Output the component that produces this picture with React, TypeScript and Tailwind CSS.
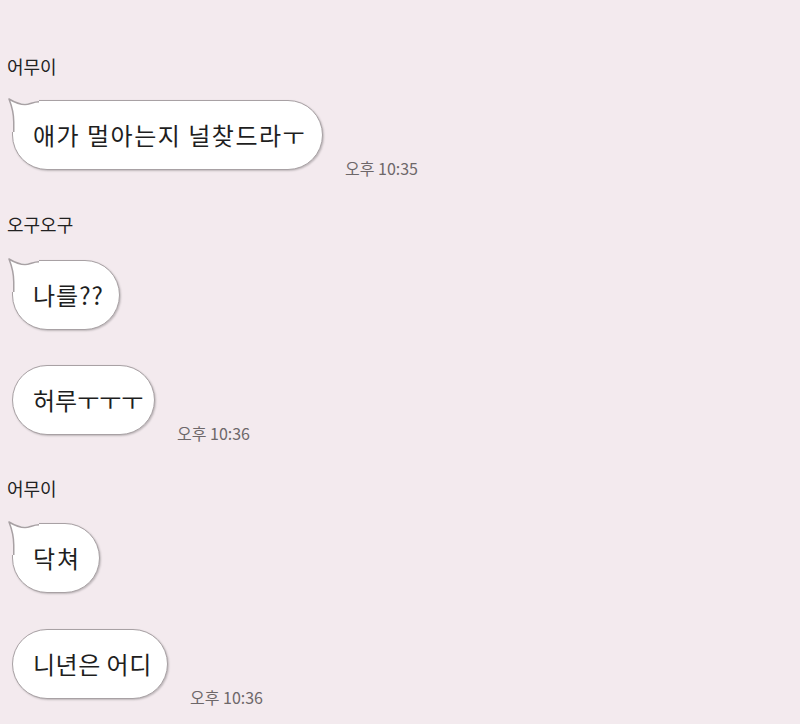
import React from "react";

const FONT = { fontFamily: '"Noto Sans CJK KR", "Noto Sans", sans-serif' };

function Tail() {
  return (
    <svg
      className="absolute left-[-5px] top-[-3px] pointer-events-none"
      width="36"
      height="36"
      viewBox="0 0 36 36"
    >
      <rect x="0" y="0" width="31" height="5.2" fill="#f3eaee" />
      <rect x="0" y="0" width="5" height="34" fill="#f3eaee" />
      <path
        d="M30.5,3.75 C25,3.75 22,6.6 17,6.6 C12,6.6 6,4 1,1 C3,6 5.75,14 5.75,24 L5.75,36 L30.5,36 Z"
        fill="#ffffff"
      />
      <path
        d="M31,3.75 C25,3.75 22,6.6 17,6.6 C12,6.6 6,4 1,1 C3,6 5.75,14 5.75,24 L5.75,34"
        fill="none"
        stroke="#a8a1a4"
        strokeWidth="1.5"
        strokeLinejoin="round"
      />
    </svg>
  );
}

function Bubble({
  text,
  tail,
  time,
  widthClass,
  trackClass,
}: {
  text: string;
  tail?: boolean;
  time?: string;
  widthClass: string;
  trackClass?: string;
}) {
  return (
    <div className="flex items-end pl-[12px]">
      <div
        className={
          "relative flex h-[70px] items-center whitespace-nowrap rounded-[35px] border-[1.5px] border-[#a8a1a4] bg-white pl-[20px] text-[24px] leading-none text-[#1e1e1e] shadow-[1px_1px_2px_rgba(0,0,0,0.22)] " +
          widthClass +
          " " +
          (trackClass ?? "") +
          " " +
          (tail ? "rounded-tl-none" : "")
        }
      >
        {tail && <Tail />}
        <span className="relative">{text}</span>
      </div>
      {time && (
        <div className="mb-[-8px] ml-[22px] text-[16px] leading-[20px] text-[#6d6769]">
          {time}
        </div>
      )}
    </div>
  );
}

function Name({ children }: { children: React.ReactNode }) {
  return (
    <div className="h-[24px] pl-[7px] text-[18px] leading-[24px] text-[#222]">
      {children}
    </div>
  );
}

export default function App() {
  return (
    <div
      className="h-[724px] w-[800px] overflow-hidden bg-[#f3eaee] pt-[54px]"
      style={FONT}
    >
      <Name>어무이</Name>
      <div className="h-[22px]" />
      <Bubble
        text="애가 멀아는지 널찾드라ㅜ"
        tail
        time="오후 10:35"
        widthClass="w-[311px]"
        trackClass="tracking-[1.5px]"
      />
      <div className="h-[42px]" />
      <Name>오구오구</Name>
      <div className="h-[24px]" />
      <Bubble text="나를??" tail widthClass="w-[108px]" trackClass="tracking-[1px]" />
      <div className="h-[35px]" />
      <Bubble text="허루ㅜㅜㅜ" time="오후 10:36" widthClass="w-[143px]" />
      <div className="h-[41px]" />
      <Name>어무이</Name>
      <div className="h-[23px]" />
      <Bubble text="닥쳐" tail widthClass="w-[88px]" trackClass="tracking-[2px]" />
      <div className="h-[36px]" />
      <Bubble
        text="니년은 어디"
        time="오후 10:36"
        widthClass="w-[156px]"
        trackClass="tracking-[0.5px]"
      />
    </div>
  );
}
